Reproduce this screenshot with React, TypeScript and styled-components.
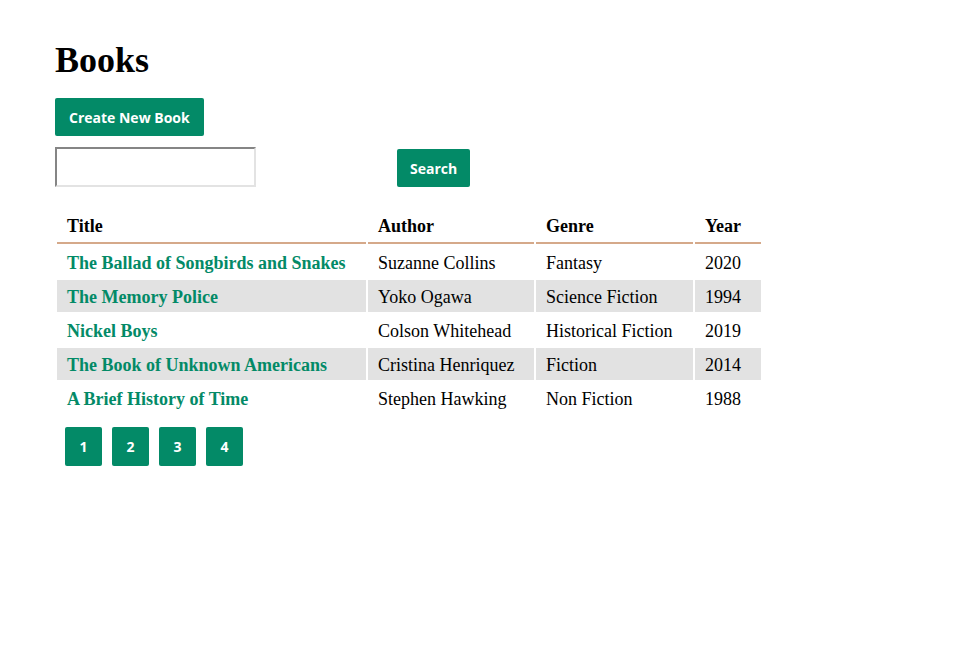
import React from "react";
import styled, { createGlobalStyle } from "styled-components";

const GREEN = "#038a67";

const Global = createGlobalStyle`
  html, body { margin: 0; padding: 0; background: #fff; }
  body { font-family: "Liberation Serif", "Times New Roman", serif; color: #000; }
`;

const Page = styled.div`
  padding: 38px 55px;
  display: flex;
  flex-direction: column;
  align-items: flex-start;
`;

const Heading = styled.h1`
  margin: 0 0 16px;
  font-size: 36px;
  line-height: 44px;
  font-weight: 700;
`;

const Button = styled.button<{ $square?: boolean }>`
  background: ${GREEN};
  color: #fff;
  border: none;
  border-radius: 2px;
  font-family: "Open Sans", "DejaVu Sans", sans-serif;
  font-weight: 700;
  font-size: 14px;
  height: ${(p) => (p.$square ? "39px" : "38px")};
  width: ${(p) => (p.$square ? "37px" : "auto")};
  padding: ${(p) => (p.$square ? "0" : "0 14px")};
  cursor: pointer;
`;

const SearchButton = styled(Button)`
  padding: 0 13px;
`;

const SearchRow = styled.form`
  display: flex;
  align-items: flex-end;
  margin-top: 11px;
  gap: 141px;
`;

const SearchInput = styled.input`
  width: 201px;
  height: 40px;
  box-sizing: border-box;
  border-style: solid;
  border-width: 2px;
  border-color: #858585 #e3e3e3 #e3e3e3 #858585;
  padding: 2px 4px;
  font-size: 16px;
  font-family: "Liberation Sans", sans-serif;
  background: #fff;
`;

const Table = styled.table`
  margin-top: 23px;
  border-collapse: separate;
  border-spacing: 2px;
  font-size: 18px;
`;

const Th = styled.th<{ $w: number }>`
  width: ${(p) => p.$w}px;
  box-sizing: border-box;
  text-align: left;
  font-weight: 700;
  padding: 4px 10px 5px;
  line-height: 21px;
  border-bottom: 2px solid #d5a98a;
`;

const Tr = styled.tr<{ $shade: boolean }>`
  background: ${(p) => (p.$shade ? "#e2e2e2" : "transparent")};
`;

const Td = styled.td`
  padding: 7px 10px 4px;
  line-height: 21px;
  white-space: nowrap;
`;

const TitleLink = styled.a`
  color: ${GREEN};
  font-weight: 700;
  text-decoration: none;
`;

const Pager = styled.div`
  display: flex;
  gap: 10px;
  margin-top: 11px;
  margin-left: 10px;
`;

const books = [
  ["The Ballad of Songbirds and Snakes", "Suzanne Collins", "Fantasy", "2020"],
  ["The Memory Police", "Yoko Ogawa", "Science Fiction", "1994"],
  ["Nickel Boys", "Colson Whitehead", "Historical Fiction", "2019"],
  ["The Book of Unknown Americans", "Cristina Henriquez", "Fiction", "2014"],
  ["A Brief History of Time", "Stephen Hawking", "Non Fiction", "1988"],
];

export default function App() {
  return (
    <>
      <Global />
      <Page>
        <Heading>Books</Heading>
        <Button>Create New Book</Button>
        <SearchRow onSubmit={(e) => e.preventDefault()}>
          <SearchInput type="text" />
          <SearchButton type="submit">Search</SearchButton>
        </SearchRow>
        <Table>
          <thead>
            <tr>
              <Th $w={309}>Title</Th>
              <Th $w={166}>Author</Th>
              <Th $w={157}>Genre</Th>
              <Th $w={66}>Year</Th>
            </tr>
          </thead>
          <tbody>
            {books.map((b, i) => (
              <Tr key={b[0]} $shade={i % 2 === 1}>
                <Td>
                  <TitleLink href="#">{b[0]}</TitleLink>
                </Td>
                <Td>{b[1]}</Td>
                <Td>{b[2]}</Td>
                <Td>{b[3]}</Td>
              </Tr>
            ))}
          </tbody>
        </Table>
        <Pager>
          {[1, 2, 3, 4].map((n) => (
            <Button key={n} $square>
              {n}
            </Button>
          ))}
        </Pager>
      </Page>
    </>
  );
}
